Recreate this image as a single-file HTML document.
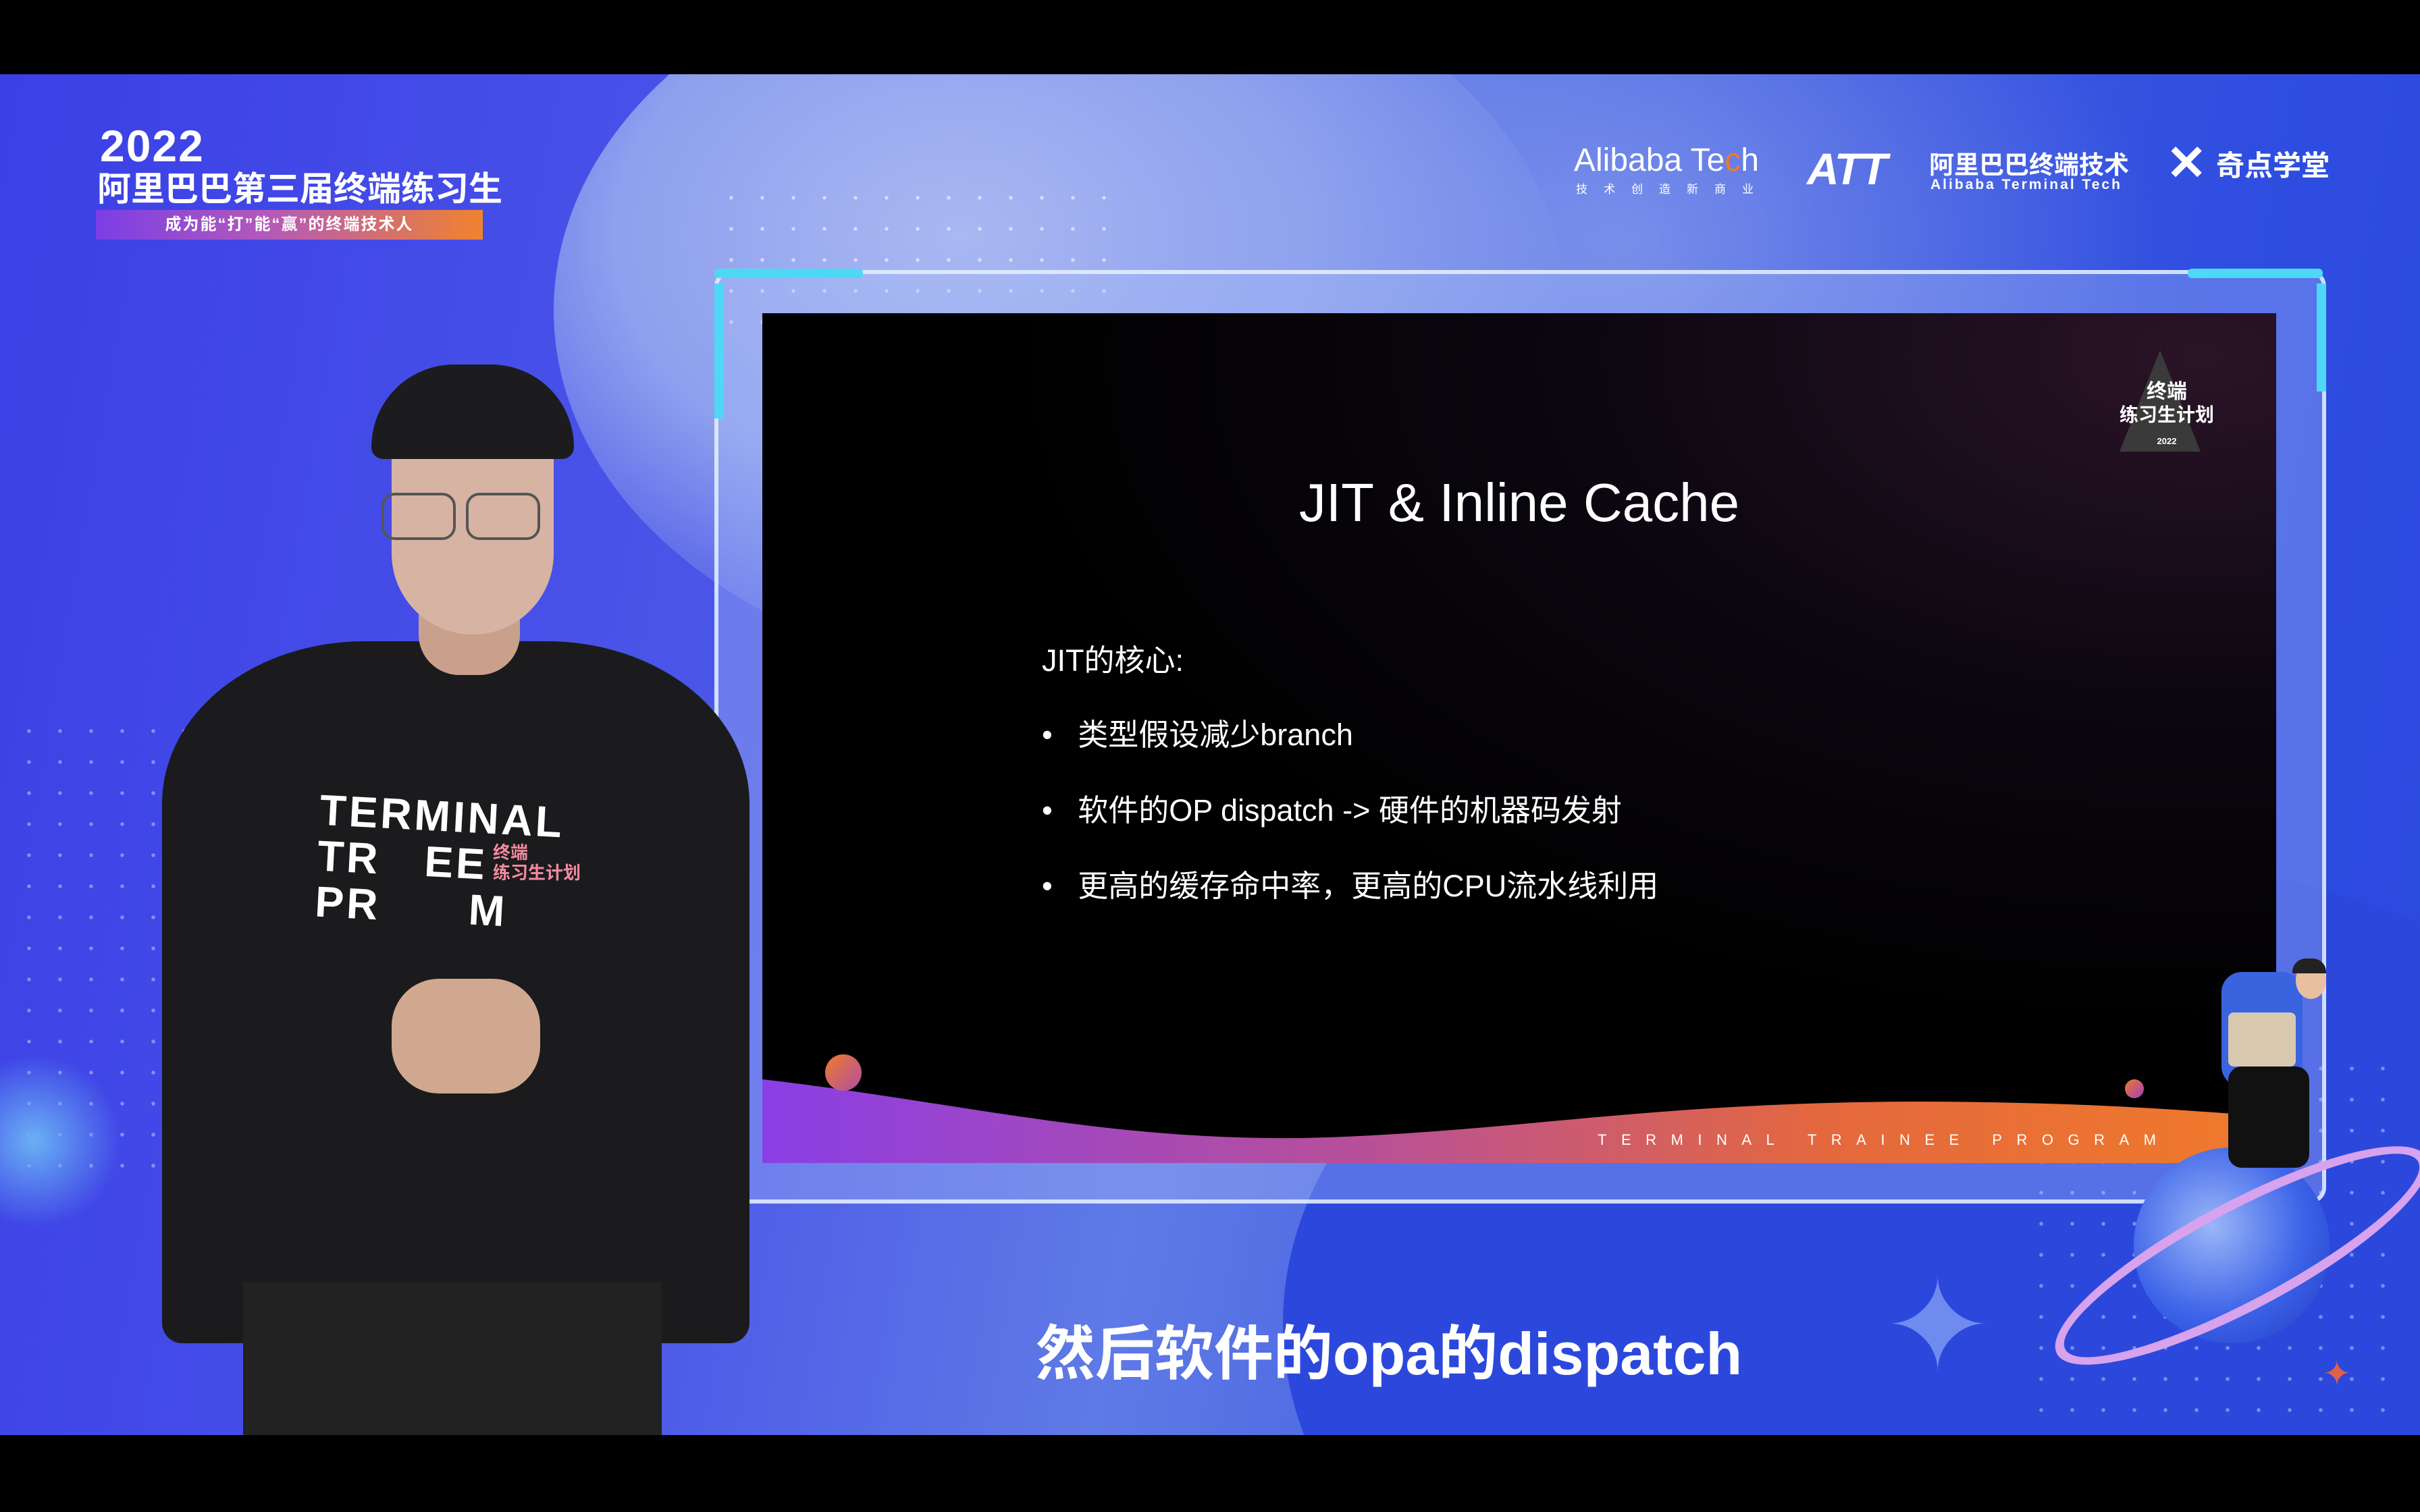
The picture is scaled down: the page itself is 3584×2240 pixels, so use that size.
<!DOCTYPE html>
<html><head><meta charset="utf-8"><style>
*{margin:0;padding:0;box-sizing:border-box}
html,body{width:3584px;height:2240px;overflow:hidden}
body{background:#000;font-family:"Liberation Sans","Noto Sans CJK SC",sans-serif}
#root{position:relative;width:3584px;height:2240px;overflow:hidden}
.a{position:absolute}
.bg{left:0;top:110px;width:3584px;height:2016px;background:linear-gradient(100deg,#3b3fe6 0%,#4a55e8 30%,#5f7ae6 50%,#3f5ae0 70%,#2f4ee0 85%,#2a48de 100%);overflow:hidden}
.dots{background-image:radial-gradient(circle,rgba(255,255,255,.55) 2.5px,transparent 3px);background-size:46px 46px}
.cn{font-family:"Liberation Sans","Noto Sans CJK SC",sans-serif}
.w{color:#fff}
</style></head><body><div id="root">
<div class="a bg">
  <div class="a" style="left:820px;top:-200px;width:1500px;height:1100px;border-radius:50%;background:radial-gradient(ellipse at 40% 40%,#a9b8f2 0%,#8ea0ee 40%,rgba(120,140,235,0) 72%)"></div>
  <div class="a" style="left:1600px;top:-300px;width:1600px;height:1100px;border-radius:50%;background:radial-gradient(ellipse,rgba(150,170,240,.6) 0%,rgba(120,140,235,0) 70%)"></div>
  <div class="a" style="left:1900px;top:1150px;width:2200px;height:1400px;border-radius:50%;background:#2c48dc"></div>
  <div class="a dots" style="left:1060px;top:160px;width:600px;height:240px"></div>
  <div class="a dots" style="left:20px;top:950px;width:400px;height:700px;opacity:.7"></div>
  <div class="a dots" style="left:3000px;top:1450px;width:560px;height:560px;opacity:.7"></div>
  <div class="a" style="left:-80px;top:1450px;width:260px;height:260px;background:radial-gradient(circle,#6ab0f5,rgba(80,120,240,0) 70%)"></div>
</div>
<div class="a w" style="left:148px;top:178px;font-size:66px;font-weight:bold;letter-spacing:2px">2022</div>
<div class="a w cn" style="left:144px;top:240px;font-size:50px;font-weight:bold">阿里巴巴第三届终端练习生</div>
<div class="a w cn" style="left:142px;top:311px;width:573px;height:44px;background:linear-gradient(90deg,#7b3ee6,#b45ab8 45%,#f0832e);font-size:24px;line-height:44px;text-align:center;font-weight:bold;letter-spacing:2px">成为能“打”能“赢”的终端技术人</div>
<div class="a w" style="left:2331px;top:210px;font-size:48px">Alibaba Te<span style="color:#f07a2a">c</span>h</div>
<div class="a w cn" style="left:2334px;top:266px;font-size:17px;letter-spacing:24px;white-space:nowrap">技术创造新商业</div>
<div class="a w" style="left:2676px;top:212px;font-size:66px;font-weight:bold;font-style:italic;letter-spacing:-2px">ATT</div>
<div class="a w cn" style="left:2857px;top:214px;font-size:37px;font-weight:bold;white-space:nowrap">阿里巴巴终端技术</div>
<div class="a w" style="left:2859px;top:262px;font-size:21px;letter-spacing:3px;font-weight:bold;white-space:nowrap">Alibaba Terminal Tech</div>
<div class="a w" style="left:3208px;top:206px;font-size:72px;font-weight:bold;line-height:1">✕</div>
<div class="a w cn" style="left:3282px;top:212px;font-size:42px;font-weight:bold;white-space:nowrap">奇点学堂</div>
<div class="a" style="left:1058px;top:400px;width:2387px;height:1383px;border:6px solid rgba(230,240,255,.85);border-radius:24px;background:rgba(170,190,245,.35)"></div>
<div class="a" style="left:1058px;top:398px;width:220px;height:14px;background:#4fd8f5;border-radius:6px"></div>
<div class="a" style="left:3240px;top:398px;width:200px;height:14px;background:#4fd8f5;border-radius:6px"></div>
<div class="a" style="left:1058px;top:420px;width:14px;height:200px;background:#4fd8f5"></div>
<div class="a" style="left:3431px;top:420px;width:14px;height:160px;background:#4fd8f5"></div>
<div class="a" style="left:1058px;top:1620px;width:14px;height:150px;background:#4fd8f5"></div>
<div class="a" style="left:1129px;top:464px;width:2242px;height:1259px;background:radial-gradient(ellipse at 95% 5%,#2a1428 0%,#0c0710 30%,#000 60%);overflow:hidden">
  <svg class="a" style="left:0;top:0" width="2242" height="1259">
    <defs><linearGradient id="g" x1="0" x2="1"><stop offset="0" stop-color="#8a3fe6"/><stop offset=".4" stop-color="#b85098"/><stop offset=".7" stop-color="#e4683e"/><stop offset="1" stop-color="#f07a2a"/></linearGradient></defs>
    <path d="M0 1135 C300 1170 500 1225 800 1222 C1100 1215 1300 1170 1700 1168 C1950 1168 2100 1180 2242 1191 L2242 1259 L0 1259 Z" fill="url(#g)"/>
  </svg>
  <div class="a" style="left:93px;top:1098px;width:54px;height:54px;border-radius:50%;background:linear-gradient(135deg,#f07a2a,#b04fa5)"></div>
  <div class="a" style="left:2018px;top:1135px;width:28px;height:28px;border-radius:50%;background:linear-gradient(135deg,#f07a2a,#a040c0)"></div>
  <div class="a w" style="left:1237px;top:1212px;font-size:22px;letter-spacing:21.5px;white-space:nowrap">TERMINAL&nbsp;TRAINEE&nbsp;PROGRAM</div>
  <div class="a" style="left:2010px;top:55px;width:0;height:0;border-left:60px solid transparent;border-right:60px solid transparent;border-bottom:150px solid #3a3a3a"></div>
  <div class="a w cn" style="left:2010px;top:100px;font-size:30px;font-weight:bold;text-align:center;line-height:34px;width:140px;white-space:nowrap">终端<br><span style="font-size:28px">练习生计划</span><br><span style="font-size:13px">2022</span></div>
  <div class="a w" style="left:0;top:235px;width:2242px;text-align:center;font-size:80px;font-family:'Liberation Sans',sans-serif">JIT &amp; Inline Cache</div>
  <div class="a w cn" style="left:414px;top:478px;font-size:45px">JIT的核心:</div>
  <div class="a w cn" style="left:414px;top:588px;font-size:45px;white-space:nowrap">•&nbsp;&nbsp;&nbsp;类型假设减少branch</div>
  <div class="a w cn" style="left:414px;top:700px;font-size:45px;white-space:nowrap">•&nbsp;&nbsp;&nbsp;软件的OP dispatch -&gt; 硬件的机器码发射</div>
  <div class="a w cn" style="left:414px;top:812px;font-size:45px;white-space:nowrap">•&nbsp;&nbsp;&nbsp;更高的缓存命中率，更高的CPU流水线利用</div>
</div>
<div class="a" style="left:3160px;top:1700px;width:290px;height:290px;border-radius:50%;background:radial-gradient(circle at 40% 40%,#9ab6f8,#3d63e8 55%,#1d3bc0)"></div>
<div class="a" style="left:3010px;top:1780px;width:620px;height:160px;border-radius:50%;border:14px solid #d7a3ee;transform:rotate(-28deg)"></div>
<div class="a" style="left:3290px;top:1440px;width:120px;height:170px;background:#3a63e0;border-radius:30px"></div>
<div class="a" style="left:3300px;top:1500px;width:100px;height:80px;background:#d8c8b0;border-radius:8px"></div>
<div class="a" style="left:3300px;top:1580px;width:120px;height:150px;background:#111;border-radius:20px"></div>
<div class="a" style="left:3400px;top:1425px;width:45px;height:55px;background:#e8c0a0;border-radius:50%"></div>
<div class="a" style="left:3395px;top:1420px;width:50px;height:22px;background:#222;border-radius:20px 20px 0 0"></div>
<div class="a" style="left:2790px;top:1870px;font-size:190px;color:#6f8bf0;line-height:1">✦</div>
<div class="a" style="left:3440px;top:2010px;font-size:50px;color:#e0604a;line-height:1">✦</div>
<div class="a" style="left:240px;top:950px;width:870px;height:1040px;background:#1b1b1d;border-radius:300px 300px 30px 30px/240px 240px 30px 30px"></div>
<div class="a" style="left:360px;top:1900px;width:620px;height:226px;background:#222"></div>
<div class="a" style="left:620px;top:880px;width:150px;height:120px;background:#c9a08c;border-radius:0 0 60px 60px"></div>
<div class="a" style="left:580px;top:560px;width:240px;height:380px;background:#d7b3a3;border-radius:110px 110px 120px 120px"></div>
<div class="a" style="left:550px;top:540px;width:300px;height:140px;background:#1c1c1e;border-radius:140px 140px 20px 20px"></div>
<div class="a" style="left:565px;top:730px;width:110px;height:70px;border:4px solid #555;border-radius:20px"></div>
<div class="a" style="left:690px;top:730px;width:110px;height:70px;border:4px solid #555;border-radius:20px"></div>
<div class="a" style="left:580px;top:1450px;width:220px;height:170px;background:#d0a890;border-radius:70px"></div>
<div class="a w" style="left:470px;top:1175px;font-size:64px;font-weight:bold;letter-spacing:4px;line-height:68px;transform:rotate(3deg);white-space:nowrap">TERMINAL<br>TR&nbsp;&nbsp;&nbsp;EE<br>PR&nbsp;&nbsp;&nbsp;&nbsp;&nbsp;&nbsp;M</div>
<div class="a cn" style="left:730px;top:1248px;font-size:26px;color:#f08aa0;font-weight:bold;line-height:30px;white-space:nowrap">终端<br>练习生计划</div>
<div class="a w cn" style="left:1057px;top:1935px;width:2000px;text-align:center;font-size:88px;font-weight:bold;white-space:nowrap">然后软件的opa的dispatch</div>
</div></body></html>
